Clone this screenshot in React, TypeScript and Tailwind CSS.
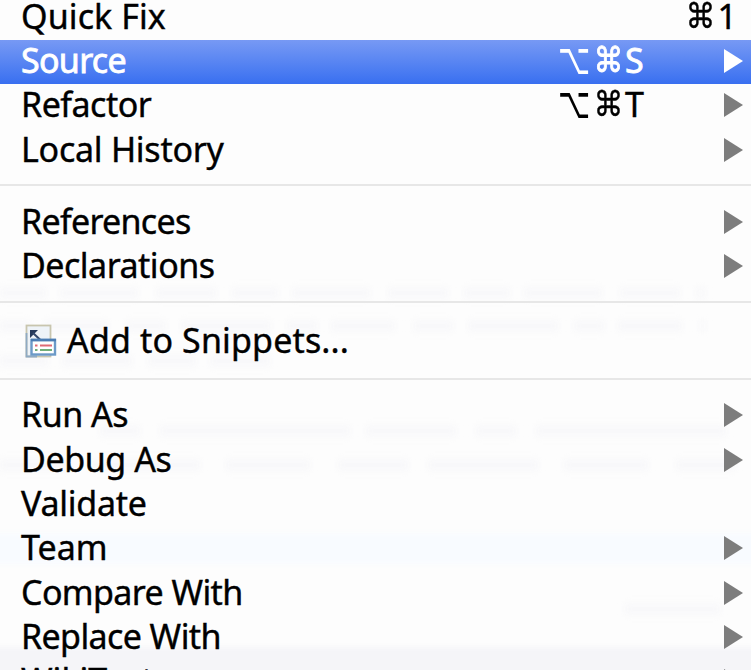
import type { ReactNode } from "react";

function Arrow({ active = false }: { active?: boolean }) {
  return (
    <span className="flex shrink-0 pb-[2px]">
      <svg viewBox="0 0 19 24" className={`h-6 w-[19px] ${active ? "fill-white" : "fill-[#7d7d7d]"}`}>
        <path d="M0 0 L19 12 L0 24 Z" />
      </svg>
    </span>
  );
}

function Snippet() {
  return (
    <svg viewBox="0 0 32 34" className="h-[34px] w-8 shrink-0">
      <rect x="1.5" y="1.5" width="24" height="31" fill="#eef3f8" stroke="#c8c5ae" strokeWidth="1.8" />
      <path d="M1.5 9 V32.5 H12" fill="none" stroke="#8faac4" strokeWidth="1.8" />
      <path d="M5 6 H13 L5 14 Z" fill="#263a5c" />
      <path d="M8 9 L16.5 17" stroke="#33476b" strokeWidth="2" />
      <rect x="6.5" y="16" width="23.5" height="14.5" fill="#fff" stroke="#6c9ac8" strokeWidth="2.4" />
      <path d="M6 16 H31" stroke="#4c7db3" strokeWidth="2.6" />
      <path d="M10 21.5 H12.5 M15 21.5 H27" stroke="#df6b75" strokeWidth="2" />
      <path d="M10 26 H12.5 M15 26 H27" stroke="#70ae79" strokeWidth="2" />
    </svg>
  );
}

function Row({ children, textClass = "", active = false, arrow = true, tall = false, keys }: {
  children: string;
  textClass?: string;
  active?: boolean;
  arrow?: boolean;
  tall?: boolean;
  keys?: ReactNode;
}) {
  return (
    <div
      className={`flex w-full shrink-0 items-center pr-2 pl-[21px] ${tall ? "h-[49.2px]" : "h-[44.35px]"} ${
        active ? "bg-linear-to-b from-[#7799f4] to-[#386ff0] text-white [-webkit-text-stroke:0.8px]" : "text-black"
      }`}
    >
      {tall && <span className="mr-[10px] ml-1 flex pb-[2px]"><Snippet /></span>}
      <span className={`pb-[4px] whitespace-pre ${textClass}`}>{children}</span>
      <span className="flex-1" />
      {keys}
      {arrow && <Arrow active={active} />}
    </div>
  );
}

function Separator() {
  return (
    <div className="flex h-[27.8px] w-full shrink-0 flex-col pt-[11.4px]">
      <div className="h-[2px] w-full bg-[#e7e7e7]" />
    </div>
  );
}

// Modifier glyphs are drawn as tall as the capitals beside them.
function Command({ className }: { className: string }) {
  return (
    <span className={`inline-block origin-center scale-x-95 scale-y-112 font-['DejaVu_Sans'] text-[31px] leading-[38px] ${className}`}>
      ⌘
    </span>
  );
}

function OptionCommand({ letter }: { letter: string }) {
  return (
    <span className="flex w-[166px] items-center pb-[4px]">
      <span className="mb-[3px] inline-block w-[35px] origin-left scale-x-90 scale-y-140 font-['DejaVu_Sans'] text-[31px] leading-[28px] [-webkit-text-stroke:0px]">
        ⌥
      </span>
      <Command className="w-[32px]" />
      <span>{letter}</span>
    </span>
  );
}

// Text of the window behind the translucent menu, too faint to read.
function Backdrop() {
  return (
    <svg viewBox="0 0 751 670" className="pointer-events-none absolute inset-0 h-[670px] w-[751px]">
      <g style={{ filter: "blur(2px)" }}>
        <rect x="-10" y="533" width="771" height="31" fill="#f8fbff" />
        <rect x="-10" y="647" width="771" height="40" fill="#f5f5f8" />
      </g>
      <g stroke="#f8f8fa" strokeWidth="11" fill="none" style={{ filter: "blur(3px)" }}>
        <path d="M0 293 H705" strokeDasharray="46 14 78 18 60 16" />
        <path d="M0 326 H705" strokeDasharray="30 14 64 18 40 15 90 16" />
        <path d="M0 361 H270" strokeDasharray="48 14 70 16" />
        <path d="M100 431 H735" strokeDasharray="40 20 190 16 90 20" />
        <path d="M0 465 H735" strokeDasharray="70 20 110 26 84 28" />
        <path d="M625 609 H720" />
      </g>
    </svg>
  );
}

export default function App() {
  return (
    <div className="relative h-[670px] w-[751px] overflow-hidden bg-[#fdfdfd] font-['Noto_Sans','Open_Sans',sans-serif] text-[34px] leading-[44px] [-webkit-text-stroke:0.4px]">
      <Backdrop />
      <div className="relative -mt-[4.4px] flex flex-col">
        <Row textClass="tracking-[0.1px]" arrow={false} keys={
          <span className="flex items-center pb-[4px]">
            <Command className="w-[33px]" />
            <span className="mr-1.5">1</span>
          </span>
        }>Quick Fix</Row>
        <Row textClass="tracking-[-0.7px]" active keys={<OptionCommand letter="S" />}>Source</Row>
        <Row textClass="tracking-[-0.5px]" keys={<OptionCommand letter="T" />}>Refactor</Row>
        <Row textClass="tracking-[-0.25px]">Local History</Row>
        <Separator />
        <Row textClass="tracking-[-0.7px]">References</Row>
        <Row textClass="tracking-[-0.5px]">Declarations</Row>
        <Separator />
        <Row textClass="tracking-[0.15px]" tall arrow={false}>Add to Snippets...</Row>
        <Separator />
        <Row textClass="tracking-[-0.5px]">Run As</Row>
        <Row textClass="tracking-[-0.4px]">Debug As</Row>
        <Row textClass="tracking-[-0.25px]" arrow={false}>Validate</Row>
        <Row>Team</Row>
        <Row textClass="tracking-[-0.6px]">Compare With</Row>
        <Row textClass="tracking-[-0.6px]">Replace With</Row>
        <Row>WikiText</Row>
      </div>
    </div>
  );
}
